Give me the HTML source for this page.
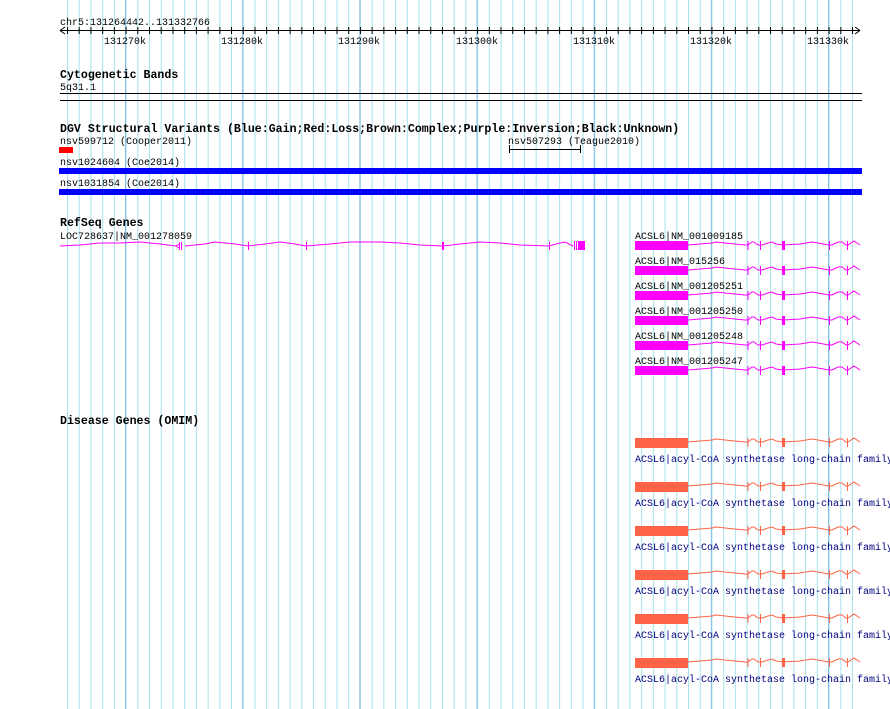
<!DOCTYPE html>
<html><head><meta charset="utf-8"><style>
html,body{margin:0;padding:0;background:#fff;width:890px;height:709px;overflow:hidden}
svg{display:block}
text{font-family:"Liberation Mono",monospace;font-size:10px;fill:#000}
.b{font-weight:bold;font-size:11.6px}
.o{fill:#000080}
</style></head><body>
<svg width="890" height="709" viewBox="0 0 890 709" xmlns="http://www.w3.org/2000/svg">
<defs>
<pattern id="g1" patternUnits="userSpaceOnUse" x="67" y="0" width="11.717" height="709"><rect x="0" y="0" width="1" height="709" fill="#a8e2ea"/></pattern>
<pattern id="g2" patternUnits="userSpaceOnUse" x="125" y="0" width="117.17" height="709"><rect x="0" y="0" width="1" height="709" fill="#88bde2"/></pattern>
<pattern id="tk" patternUnits="userSpaceOnUse" x="67" y="0" width="11.717" height="709"><rect x="0" y="27" width="1" height="7" fill="#000"/></pattern>
</defs>
<rect x="66" y="0" width="788" height="709" fill="url(#g1)"/>
<rect x="124" y="0" width="730" height="709" fill="url(#g2)"/>

<!-- ruler -->
<text x="60" y="25">chr5:131264442..131332766</text>
<rect x="60" y="30" width="800" height="1" fill="#000"/>
<rect x="66" y="26" width="788" height="9" fill="url(#tk)"/>
<path d="M60 30.5 L65 27 M60 30.5 L65 34 M860 30.5 L855 27 M860 30.5 L855 34" stroke="#000" fill="none"/>
<g text-anchor="middle">
<text x="125" y="44">131270k</text><text x="242" y="44">131280k</text><text x="359" y="44">131290k</text>
<text x="477" y="44">131300k</text><text x="594" y="44">131310k</text><text x="711" y="44">131320k</text><text x="828" y="44">131330k</text>
</g>

<!-- cytogenetic -->
<text class="b" x="60" y="78">Cytogenetic Bands</text>
<text x="60" y="90">5q31.1</text>
<rect x="60" y="93" width="802" height="1" fill="#000"/>
<rect x="60" y="100" width="802" height="1" fill="#000"/>

<!-- DGV -->
<text class="b" x="60" y="132">DGV Structural Variants (Blue:Gain;Red:Loss;Brown:Complex;Purple:Inversion;Black:Unknown)</text>
<text x="60" y="144">nsv599712 (Cooper2011)</text>
<rect x="59" y="147" width="14" height="6" fill="#ff0000"/>
<text x="508" y="144">nsv507293 (Teague2010)</text>
<path d="M509.5 145v8 M580.5 145v8 M509 149.5h72" stroke="#000" fill="none"/>
<text x="60" y="165">nsv1024604 (Coe2014)</text>
<rect x="59" y="168" width="803" height="6" fill="#0000ff"/>
<text x="60" y="186">nsv1031854 (Coe2014)</text>
<rect x="59" y="189" width="803" height="6" fill="#0000ff"/>

<!-- RefSeq -->
<text class="b" x="60" y="226">RefSeq Genes</text>
<text x="60" y="239">LOC728637|NM_001278059</text>
<g stroke="#ff00ff" fill="none">
<polyline points="60,246 80,245 100,243 120,243 140,242 160,244 176,246 179,244 176,246 179,248"/>
<polyline points="185,246 205,244 215,242 235,244 248,246 265,244 280,242 295,244 306,246 330,244 350,242 380,242 400,243 420,245 443,246 460,244 480,242 500,243 520,245 549,246 560,243 565,242 573,246"/>
<path d="M179.5 242v8 M181.5 242v8 M248.5 242v8 M306.5 242v8 M443 242v8 M549.5 242v8 M574.5 241v9 M576.5 241v9"/>
</g>
<rect x="442" y="242" width="2" height="8" fill="#ff00ff"/>
<rect x="578" y="241" width="7" height="9" fill="#ff00ff"/>

<g id="acsl">
<text x="635" y="239">ACSL6|NM_001009185</text>
<rect x="635" y="241" width="53" height="9" fill="#ff00ff"/>
<g stroke="#ff00ff" fill="none">
<polyline points="688,245 700,244 712,243 716,242 725,243 745,245 748,245 752,242 754,242 758,245 762,245 768,243 772,242 776,244 783,245 800,244 812,242 818,243 829,245 832,245 838,242 842,242 846,245 848,245 854,241 860,245"/>
<path d="M748 241v9 M760.5 241v9 M829.5 241v9 M847.5 241v9"/>
</g>
<rect x="782" y="241" width="3" height="9" fill="#ff00ff"/>
</g>
<g transform="translate(0,25)"><text x="635" y="239">ACSL6|NM_015256</text><rect x="635" y="241" width="53" height="9" fill="#ff00ff"/><g stroke="#ff00ff" fill="none"><polyline points="688,245 700,244 712,243 716,242 725,243 745,245 748,245 752,242 754,242 758,245 762,245 768,243 772,242 776,244 783,245 800,244 812,242 818,243 829,245 832,245 838,242 842,242 846,245 848,245 854,241 860,245"/><path d="M748 241v9 M760.5 241v9 M829.5 241v9 M847.5 241v9"/></g><rect x="782" y="241" width="3" height="9" fill="#ff00ff"/></g>
<g transform="translate(0,50)"><text x="635" y="239">ACSL6|NM_001205251</text><rect x="635" y="241" width="53" height="9" fill="#ff00ff"/><g stroke="#ff00ff" fill="none"><polyline points="688,245 700,244 712,243 716,242 725,243 745,245 748,245 752,242 754,242 758,245 762,245 768,243 772,242 776,244 783,245 800,244 812,242 818,243 829,245 832,245 838,242 842,242 846,245 848,245 854,241 860,245"/><path d="M748 241v9 M760.5 241v9 M829.5 241v9 M847.5 241v9"/></g><rect x="782" y="241" width="3" height="9" fill="#ff00ff"/></g>
<g transform="translate(0,75)"><text x="635" y="239">ACSL6|NM_001205250</text><rect x="635" y="241" width="53" height="9" fill="#ff00ff"/><g stroke="#ff00ff" fill="none"><polyline points="688,245 700,244 712,243 716,242 725,243 745,245 748,245 752,242 754,242 758,245 762,245 768,243 772,242 776,244 783,245 800,244 812,242 818,243 829,245 832,245 838,242 842,242 846,245 848,245 854,241 860,245"/><path d="M748 241v9 M760.5 241v9 M829.5 241v9 M847.5 241v9"/></g><rect x="782" y="241" width="3" height="9" fill="#ff00ff"/></g>
<g transform="translate(0,100)"><text x="635" y="239">ACSL6|NM_001205248</text><rect x="635" y="241" width="53" height="9" fill="#ff00ff"/><g stroke="#ff00ff" fill="none"><polyline points="688,245 700,244 712,243 716,242 725,243 745,245 748,245 752,242 754,242 758,245 762,245 768,243 772,242 776,244 783,245 800,244 812,242 818,243 829,245 832,245 838,242 842,242 846,245 848,245 854,241 860,245"/><path d="M748 241v9 M760.5 241v9 M829.5 241v9 M847.5 241v9"/></g><rect x="782" y="241" width="3" height="9" fill="#ff00ff"/></g>
<g transform="translate(0,125)"><text x="635" y="239">ACSL6|NM_001205247</text><rect x="635" y="241" width="53" height="9" fill="#ff00ff"/><g stroke="#ff00ff" fill="none"><polyline points="688,245 700,244 712,243 716,242 725,243 745,245 748,245 752,242 754,242 758,245 762,245 768,243 772,242 776,244 783,245 800,244 812,242 818,243 829,245 832,245 838,242 842,242 846,245 848,245 854,241 860,245"/><path d="M748 241v9 M760.5 241v9 M829.5 241v9 M847.5 241v9"/></g><rect x="782" y="241" width="3" height="9" fill="#ff00ff"/></g>

<!-- OMIM -->
<text class="b" x="60" y="424">Disease Genes (OMIM)</text>
<g id="om0"><rect x="635" y="438" width="53" height="10" fill="#ff6347"/><g stroke="#ff6347" fill="none"><polyline points="688,442 700,441 712,440 716,439 725,440 745,442 748,442 752,439 754,439 758,442 762,442 768,440 772,439 776,441 783,442 800,441 812,439 818,440 829,442 832,442 838,439 842,439 846,442 848,442 854,438 860,442"/><path d="M748 438v9 M760.5 438v9 M829.5 438v9 M847.5 438v9"/></g><rect x="782" y="438" width="3" height="9" fill="#ff6347"/><text class="o" x="635" y="462">ACSL6|acyl-CoA synthetase long-chain family</text></g>
<g transform="translate(0,44)"><rect x="635" y="438" width="53" height="10" fill="#ff6347"/><g stroke="#ff6347" fill="none"><polyline points="688,442 700,441 712,440 716,439 725,440 745,442 748,442 752,439 754,439 758,442 762,442 768,440 772,439 776,441 783,442 800,441 812,439 818,440 829,442 832,442 838,439 842,439 846,442 848,442 854,438 860,442"/><path d="M748 438v9 M760.5 438v9 M829.5 438v9 M847.5 438v9"/></g><rect x="782" y="438" width="3" height="9" fill="#ff6347"/><text class="o" x="635" y="462">ACSL6|acyl-CoA synthetase long-chain family</text></g>
<g transform="translate(0,88)"><rect x="635" y="438" width="53" height="10" fill="#ff6347"/><g stroke="#ff6347" fill="none"><polyline points="688,442 700,441 712,440 716,439 725,440 745,442 748,442 752,439 754,439 758,442 762,442 768,440 772,439 776,441 783,442 800,441 812,439 818,440 829,442 832,442 838,439 842,439 846,442 848,442 854,438 860,442"/><path d="M748 438v9 M760.5 438v9 M829.5 438v9 M847.5 438v9"/></g><rect x="782" y="438" width="3" height="9" fill="#ff6347"/><text class="o" x="635" y="462">ACSL6|acyl-CoA synthetase long-chain family</text></g>
<g transform="translate(0,132)"><rect x="635" y="438" width="53" height="10" fill="#ff6347"/><g stroke="#ff6347" fill="none"><polyline points="688,442 700,441 712,440 716,439 725,440 745,442 748,442 752,439 754,439 758,442 762,442 768,440 772,439 776,441 783,442 800,441 812,439 818,440 829,442 832,442 838,439 842,439 846,442 848,442 854,438 860,442"/><path d="M748 438v9 M760.5 438v9 M829.5 438v9 M847.5 438v9"/></g><rect x="782" y="438" width="3" height="9" fill="#ff6347"/><text class="o" x="635" y="462">ACSL6|acyl-CoA synthetase long-chain family</text></g>
<g transform="translate(0,176)"><rect x="635" y="438" width="53" height="10" fill="#ff6347"/><g stroke="#ff6347" fill="none"><polyline points="688,442 700,441 712,440 716,439 725,440 745,442 748,442 752,439 754,439 758,442 762,442 768,440 772,439 776,441 783,442 800,441 812,439 818,440 829,442 832,442 838,439 842,439 846,442 848,442 854,438 860,442"/><path d="M748 438v9 M760.5 438v9 M829.5 438v9 M847.5 438v9"/></g><rect x="782" y="438" width="3" height="9" fill="#ff6347"/><text class="o" x="635" y="462">ACSL6|acyl-CoA synthetase long-chain family</text></g>
<g transform="translate(0,220)"><rect x="635" y="438" width="53" height="10" fill="#ff6347"/><g stroke="#ff6347" fill="none"><polyline points="688,442 700,441 712,440 716,439 725,440 745,442 748,442 752,439 754,439 758,442 762,442 768,440 772,439 776,441 783,442 800,441 812,439 818,440 829,442 832,442 838,439 842,439 846,442 848,442 854,438 860,442"/><path d="M748 438v9 M760.5 438v9 M829.5 438v9 M847.5 438v9"/></g><rect x="782" y="438" width="3" height="9" fill="#ff6347"/><text class="o" x="635" y="462">ACSL6|acyl-CoA synthetase long-chain family</text></g>
</svg>
</body></html>
